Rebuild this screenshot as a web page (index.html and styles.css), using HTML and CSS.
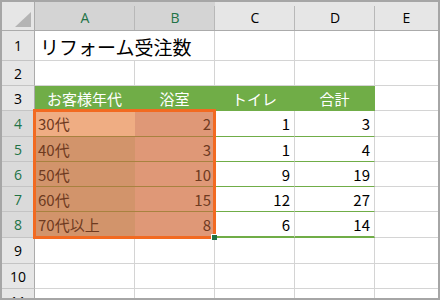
FILE: index.html
```html
<!DOCTYPE html>
<html lang="ja">
<head>
    <meta charset="UTF-8">
    <meta name="viewport" content="width=device-width, initial-scale=1.0">
    <title>リフォーム受注数</title>
    <link rel="stylesheet" href="styles.css">
</head>
<body>
    <div class="sheet">
        <div class="row head">
            <div class="corner"><span class="tri"></span></div>
            <div class="col sel">A</div>
            <div class="col sel">B</div>
            <div class="col">C</div>
            <div class="col">D</div>
            <div class="col last">E</div>
        </div>
        <div class="row r1">
            <div class="num">1</div>
            <div class="cell title">リフォーム受注数</div>
            <div class="cell"></div>
            <div class="cell"></div>
            <div class="cell last"></div>
        </div>
        <div class="row">
            <div class="num">2</div>
            <div class="cell"></div>
            <div class="cell"></div>
            <div class="cell"></div>
            <div class="cell"></div>
            <div class="cell last"></div>
        </div>
        <div class="row">
            <div class="num">3</div>
            <div class="cell th">お客様年代</div>
            <div class="cell th">浴室</div>
            <div class="cell th">トイレ</div>
            <div class="cell th">合計</div>
            <div class="cell last"></div>
        </div>
        <div class="row r4">
            <div class="num sel">4</div>
            <div class="cell age active">30代</div>
            <div class="cell val picked">2</div>
            <div class="cell val tb">1</div>
            <div class="cell val tb">3</div>
            <div class="cell last"></div>
        </div>
        <div class="row">
            <div class="num sel">5</div>
            <div class="cell age">40代</div>
            <div class="cell val picked">3</div>
            <div class="cell val tb">1</div>
            <div class="cell val tb">4</div>
            <div class="cell last"></div>
        </div>
        <div class="row">
            <div class="num sel">6</div>
            <div class="cell age">50代</div>
            <div class="cell val picked">10</div>
            <div class="cell val tb">9</div>
            <div class="cell val tb">19</div>
            <div class="cell last"></div>
        </div>
        <div class="row">
            <div class="num sel">7</div>
            <div class="cell age">60代</div>
            <div class="cell val picked">15</div>
            <div class="cell val tb">12</div>
            <div class="cell val tb">27</div>
            <div class="cell last"></div>
        </div>
        <div class="row r8">
            <div class="num sel">8</div>
            <div class="cell age">70代以上</div>
            <div class="cell val picked">8</div>
            <div class="cell val tb end">6</div>
            <div class="cell val tb end">14</div>
            <div class="cell last"></div>
        </div>
        <div class="row r9">
            <div class="num">9</div>
            <div class="cell"></div>
            <div class="cell"></div>
            <div class="cell"></div>
            <div class="cell"></div>
            <div class="cell last"></div>
        </div>
        <div class="row">
            <div class="num">10</div>
            <div class="cell"></div>
            <div class="cell"></div>
            <div class="cell"></div>
            <div class="cell"></div>
            <div class="cell last"></div>
        </div>
        <div class="row">
            <div class="num">11</div>
            <div class="cell"></div>
            <div class="cell"></div>
            <div class="cell"></div>
            <div class="cell"></div>
            <div class="cell last"></div>
        </div>

        <!-- selection A4:B8 -->
        <div class="selection"><span class="handle"></span></div>
    </div>
</body>
</html>
```

FILE: styles.css
```css
body {
    margin: 0;
    background-color: #ffffff;
}

.sheet {
    position: relative;
    width: 440px;
    height: 300px;
    box-sizing: border-box;
    border: 2px solid #a6a6a6;
    overflow: hidden;
    background-color: #ffffff;
    font-family: "Noto Sans CJK JP", "Noto Sans", sans-serif;
    font-size: 15px;
    color: #000000;
}

.row {
    display: grid;
    grid-template-columns: 33px 100px 80px 80px 80px 1fr;
    height: 25px;
}

.row > div {
    box-sizing: border-box;
    display: flex;
    align-items: center;
    white-space: nowrap;
}

.head { height: 29px; }
.r1 { height: 30px; }
.r4, .r8, .r9 { height: 26px; }

/* column headers */
.corner {
    position: relative;
    background-color: #e6e6e6;
    border-right: 1px solid #ababab;
    border-bottom: 1px solid #ababab;
}

.tri {
    position: absolute;
    right: 3px;
    bottom: 3px;
    width: 16px;
    height: 15px;
    background-color: #b4b4b4;
    clip-path: polygon(100% 0, 100% 100%, 0 100%);
}

.col {
    justify-content: center;
    padding-top: 3px;
    font-family: "Open Sans", "Noto Sans", sans-serif;
    font-size: 14px;
    background: #e6e6e6 linear-gradient(#b8b8b8, #b8b8b8) right bottom / 1px 24px no-repeat;
    border-bottom: 1px solid #ababab;
}

.col.sel {
    background-color: #d4d4d4;
    color: #217346;
}

.col.last { background-image: none; }

/* row headers */
.num {
    justify-content: center;
    font-family: "Open Sans", "Noto Sans", sans-serif;
    font-size: 14px;
    background-color: #e6e6e6;
    border-right: 1px solid #ababab;
    border-bottom: 1px solid #c4c4c4;
}

.num.sel {
    background-color: #dadada;
    color: #217346;
}

/* cells */
.cell {
    border-right: 1px solid #d4d4d4;
    border-bottom: 1px solid #d4d4d4;
}

.cell.last { border-right: none; }

.title {
    grid-column: span 2;
    padding-left: 5px;
    padding-top: 2px;
    font-size: 19px;
}

.th {
    justify-content: center;
    background-color: #70ad47;
    color: #ffffff;
    border-right-color: #70ad47;
    border-bottom-color: #70ad47;
}

.age {
    padding-left: 3px;
    background-color: #d2946b;
    color: #6e3a1f;
    border-right: none;
    border-bottom-color: #a8823f;
}

.age.active { background-color: #efad83; }

.val {
    justify-content: flex-end;
    padding-right: 4px;
}

.picked {
    background-color: #df9877;
    color: #6e3a1f;
    border-right: none;
    border-bottom-color: #a8823f;
}

.tb { border-bottom-color: #70ad47; }
.tb.end { border-bottom-width: 2px; }

/* selection frame */
.selection {
    position: absolute;
    left: 31px;
    top: 107px;
    width: 183px;
    height: 130px;
    box-sizing: border-box;
    border: 3px solid #f26a21;
}

.handle {
    position: absolute;
    right: -4px;
    bottom: -4px;
    width: 5px;
    height: 5px;
    background-color: #217346;
    border-left: 1px solid #ffffff;
    border-top: 1px solid #ffffff;
}
```
